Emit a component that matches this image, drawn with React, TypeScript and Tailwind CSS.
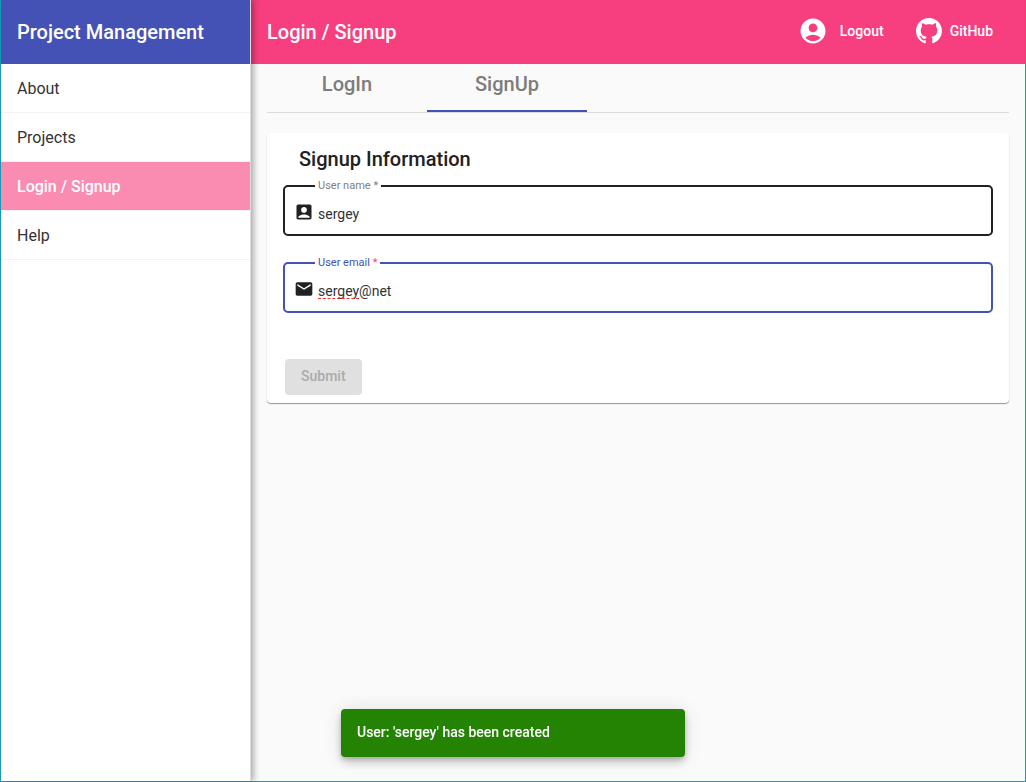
import { useState } from 'react';
import type { ReactNode } from 'react';
import { MdAccountBox, MdAccountCircle, MdEmail } from 'react-icons/md';

const links = ['About', 'Projects', 'Login / Signup', 'Help'];

function Sidebar() {
  return (
    <aside className="relative z-10 flex w-[250px] shrink-0 flex-col border-r border-[#dcdcdc] bg-white shadow-[3px_0_6px_rgba(0,0,0,0.3)]">
      <div className="flex h-16 items-center bg-[#4552b5] px-4 text-xl font-medium text-white">
        Project Management
      </div>
      <nav className="flex flex-col">
        {links.map((name) => (
          <a
            key={name}
            href="#"
            aria-current={name === 'Login / Signup' ? 'page' : undefined}
            className="flex h-[49px] items-center border-b border-[#f2f2f2] px-4 pt-[2px] text-base text-[#333333] aria-[current=page]:bg-[#fa8bb1] aria-[current=page]:font-medium aria-[current=page]:text-white"
          >
            {name}
          </a>
        ))}
      </nav>
    </aside>
  );
}

function GitHubMark() {
  return (
    <svg viewBox="0 0 16 16" className="size-[26px]" fill="currentColor" aria-hidden="true">
      <path d="M8 0C3.58 0 0 3.58 0 8c0 3.54 2.29 6.53 5.47 7.59.4.07.55-.17.55-.38 0-.19-.01-.82-.01-1.49-2.01.37-2.53-.49-2.69-.94-.09-.23-.48-.94-.82-1.13-.28-.15-.68-.52-.01-.53.63-.01 1.08.58 1.23.82.72 1.21 1.87.87 2.33.66.07-.52.28-.87.51-1.07-1.78-.2-3.64-.89-3.64-3.95 0-.87.31-1.59.82-2.15-.08-.2-.36-1.02.08-2.12 0 0 .67-.21 2.2.82.64-.18 1.32-.27 2-.27s1.36.09 2 .27c1.53-1.04 2.2-.82 2.2-.82.44 1.1.16 1.92.08 2.12.51.56.82 1.27.82 2.15 0 3.07-1.87 3.75-3.65 3.95.29.25.54.73.54 1.48 0 1.07-.01 1.93-.01 2.2 0 .21.15.46.55.38A8.01 8.01 0 0 0 16 8c0-4.42-3.58-8-8-8Z" />
    </svg>
  );
}

interface FieldProps {
  id: string;
  label: string;
  value: string;
  icon: ReactNode;
  active?: boolean;
  onChange: (value: string) => void;
}

function Field({ id, label, value, icon, active = false, onChange }: FieldProps) {
  return (
    <fieldset
      className={`h-14 rounded-[5px] border-2 px-[9px] ${active ? 'border-[#4552b5]' : 'border-[#212121]'}`}
    >
      <legend
        className={`ml-[21px] px-[3px] text-[11px] leading-3 ${active ? 'text-[#4552b5]' : 'text-[#808080]'}`}
      >
        <label htmlFor={id}>
          {label} <span className={active ? 'text-[#f73f7f]' : ''}>*</span>
        </label>
      </legend>
      <div className="flex h-11 items-center gap-1">
        <span className="-mt-1 text-[#212121]">{icon}</span>
        <div className="relative flex-1">
          <input
            id={id}
            type="text"
            value={value}
            onChange={(e) => onChange(e.target.value)}
            className="block h-5 w-full bg-transparent text-sm text-[#333333] outline-none"
          />
          {active && (
            <span className="pointer-events-none absolute bottom-[2px] left-0 w-[41px] border-b border-dashed border-[#f03030]" />
          )}
        </div>
      </div>
    </fieldset>
  );
}

export default function App() {
  const [name, setName] = useState('sergey');
  const [email, setEmail] = useState('sergey@net');

  return (
    <div className="flex min-h-screen border-x border-b border-[#1b9fba] bg-[#fafafa] font-[Roboto,sans-serif]">
      <Sidebar />
      <div className="flex min-w-0 flex-1 flex-col">
        <header className="flex h-16 items-center justify-between bg-[#f73f7f] pr-8 pl-4 text-white">
          <h1 className="text-xl font-medium">Login / Signup</h1>
          <div className="flex items-center gap-8 pb-[2px] text-sm font-medium">
            <button type="button" className="flex items-center gap-3">
              <MdAccountCircle className="size-[30px]" />
              Logout
            </button>
            <a href="#" className="flex items-center gap-2">
              <GitHubMark />
              GitHub
            </a>
          </div>
        </header>
        <main className="px-4">
          <div role="tablist" className="flex border-b border-[#dcdcdc] text-xl font-medium text-[#7c7c7c]">
            <button type="button" role="tab" aria-selected="false" className="h-12 w-40 pb-2">
              LogIn
            </button>
            <button
              type="button"
              role="tab"
              aria-selected="true"
              className="h-12 w-40 border-b-2 border-[#4552b5] pb-[6px]"
            >
              SignUp
            </button>
          </div>
          <form
            onSubmit={(e) => e.preventDefault()}
            className="mt-5 rounded-[4px] bg-white px-4 pt-3 pb-2 shadow-[0_1px_1px_rgba(0,0,0,0.4)]"
          >
            <h2 className="px-4 text-xl leading-7 font-medium text-[#212121]">Signup Information</h2>
            <div className="mt-[7px] flex flex-col gap-[21px]">
              <Field
                id="user-name"
                label="User name"
                value={name}
                onChange={setName}
                icon={<MdAccountBox className="size-5" />}
              />
              <Field
                id="user-email"
                label="User email"
                value={email}
                onChange={setEmail}
                active
                icon={<MdEmail className="size-5" />}
              />
            </div>
            <button
              type="submit"
              disabled
              className="mt-[46px] ml-[2px] block h-9 rounded-[4px] bg-[#e0e0e0] px-4 pb-[2px] text-sm font-medium text-[#ababab]"
            >
              Submit
            </button>
          </form>
        </main>
      </div>
      <div
        role="status"
        className="fixed bottom-[25px] left-1/2 z-20 flex h-12 w-[344px] -translate-x-1/2 items-center rounded-[4px] bg-[#258304] px-4 pb-[2px] text-sm font-medium text-white shadow-[0_3px_5px_-1px_rgba(0,0,0,0.2),0_6px_10px_0_rgba(0,0,0,0.14),0_1px_18px_0_rgba(0,0,0,0.12)]"
      >
        User: 'sergey' has been created
      </div>
    </div>
  );
}
